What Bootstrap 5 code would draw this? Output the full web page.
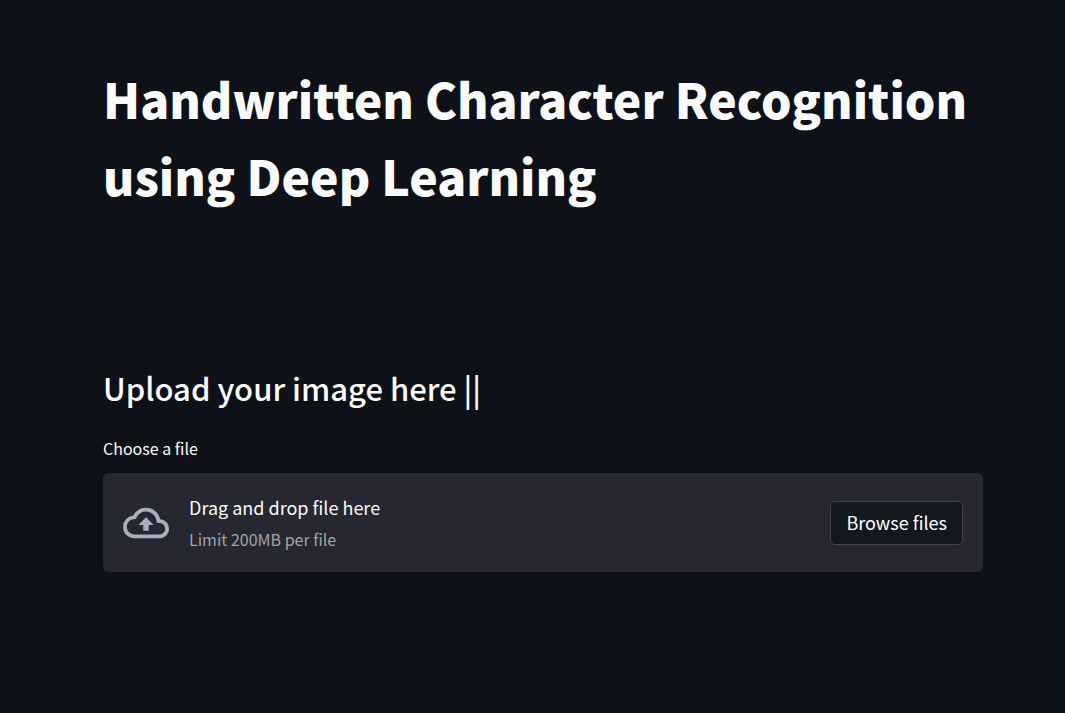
<!DOCTYPE html>
<html lang="en" data-bs-theme="dark">
<head>
<meta charset="utf-8">
<meta name="viewport" content="width=device-width, initial-scale=1">
<title>Handwritten Character Recognition</title>
<link rel="stylesheet" href="https://cdn.jsdelivr.net/npm/bootstrap@5.3.0/dist/css/bootstrap.min.css">
<style>
body { background: #0e1117; color: #fafafa; font-family: "Noto Sans CJK JP", "Open Sans", sans-serif; }
.app-main { padding: 60px 20px 0; }
.app-title { font-size: 48px; line-height: 77px; font-weight: 900; margin-bottom: 152px; color: #fafafa; }
.app-heading { font-size: 31px; line-height: 44px; font-weight: 500; margin-bottom: 24px; color: #fafafa; }
.upload-label { font-size: 16px; line-height: 28px; margin-bottom: 11px; }
.dropzone { background: #262730; border-radius: 5px; padding: 18px 20px; }
.drop-text { font-size: 18px; line-height: 33px; }
.drop-limit { font-size: 16px; line-height: 30px; color: #a3a3a8; }
.cloud { width: 46px; height: 46px; margin-right: 20px; color: #a9aec1; }
.btn-browse { font-size: 18px; line-height: 28px; padding: 6px 15px 8px; color: #fff; background: #131720; border: 1px solid #41424b; border-radius: 5px; }
@media (min-width: 768px) { .app-main { padding-left: 103px; padding-right: 82px; } }
</style>
</head>
<body>
<main class="app-main">
  <h1 class="app-title">Handwritten Character Recognition using Deep Learning</h1>
  <h2 class="app-heading">Upload your image here ||</h2>
  <label class="upload-label d-block" for="browse">Choose a file</label>
  <section class="dropzone d-flex align-items-center">
    <svg class="cloud flex-shrink-0" viewBox="0 0 24 24" fill="currentColor" aria-hidden="true"><path d="M19.35 10.04A7.49 7.49 0 0 0 12 4C9.11 4 6.6 5.64 5.35 8.04A5.994 5.994 0 0 0 0 14c0 3.31 2.69 6 6 6h13c2.76 0 5-2.24 5-5 0-2.64-2.05-4.78-4.65-4.96zM19 18H6c-2.21 0-4-1.79-4-4 0-2.05 1.53-3.76 3.56-3.97l1.07-.11.5-.95A5.469 5.469 0 0 1 12 6c2.62 0 4.88 1.86 5.39 4.43l.3 1.5 1.53.11A2.98 2.98 0 0 1 22 15c0 1.65-1.35 3-3 3zM8 13h2.55v3h2.9v-3H16l-4-4z"/></svg>
    <div class="d-flex flex-column flex-grow-1">
      <span class="drop-text">Drag and drop file here</span>
      <span class="drop-limit">Limit 200MB per file</span>
    </div>
    <button class="btn btn-browse" id="browse" type="button">Browse files</button>
  </section>
</main>
<script src="https://cdn.jsdelivr.net/npm/bootstrap@5.3.0/dist/js/bootstrap.bundle.min.js"></script>
</body>
</html>
